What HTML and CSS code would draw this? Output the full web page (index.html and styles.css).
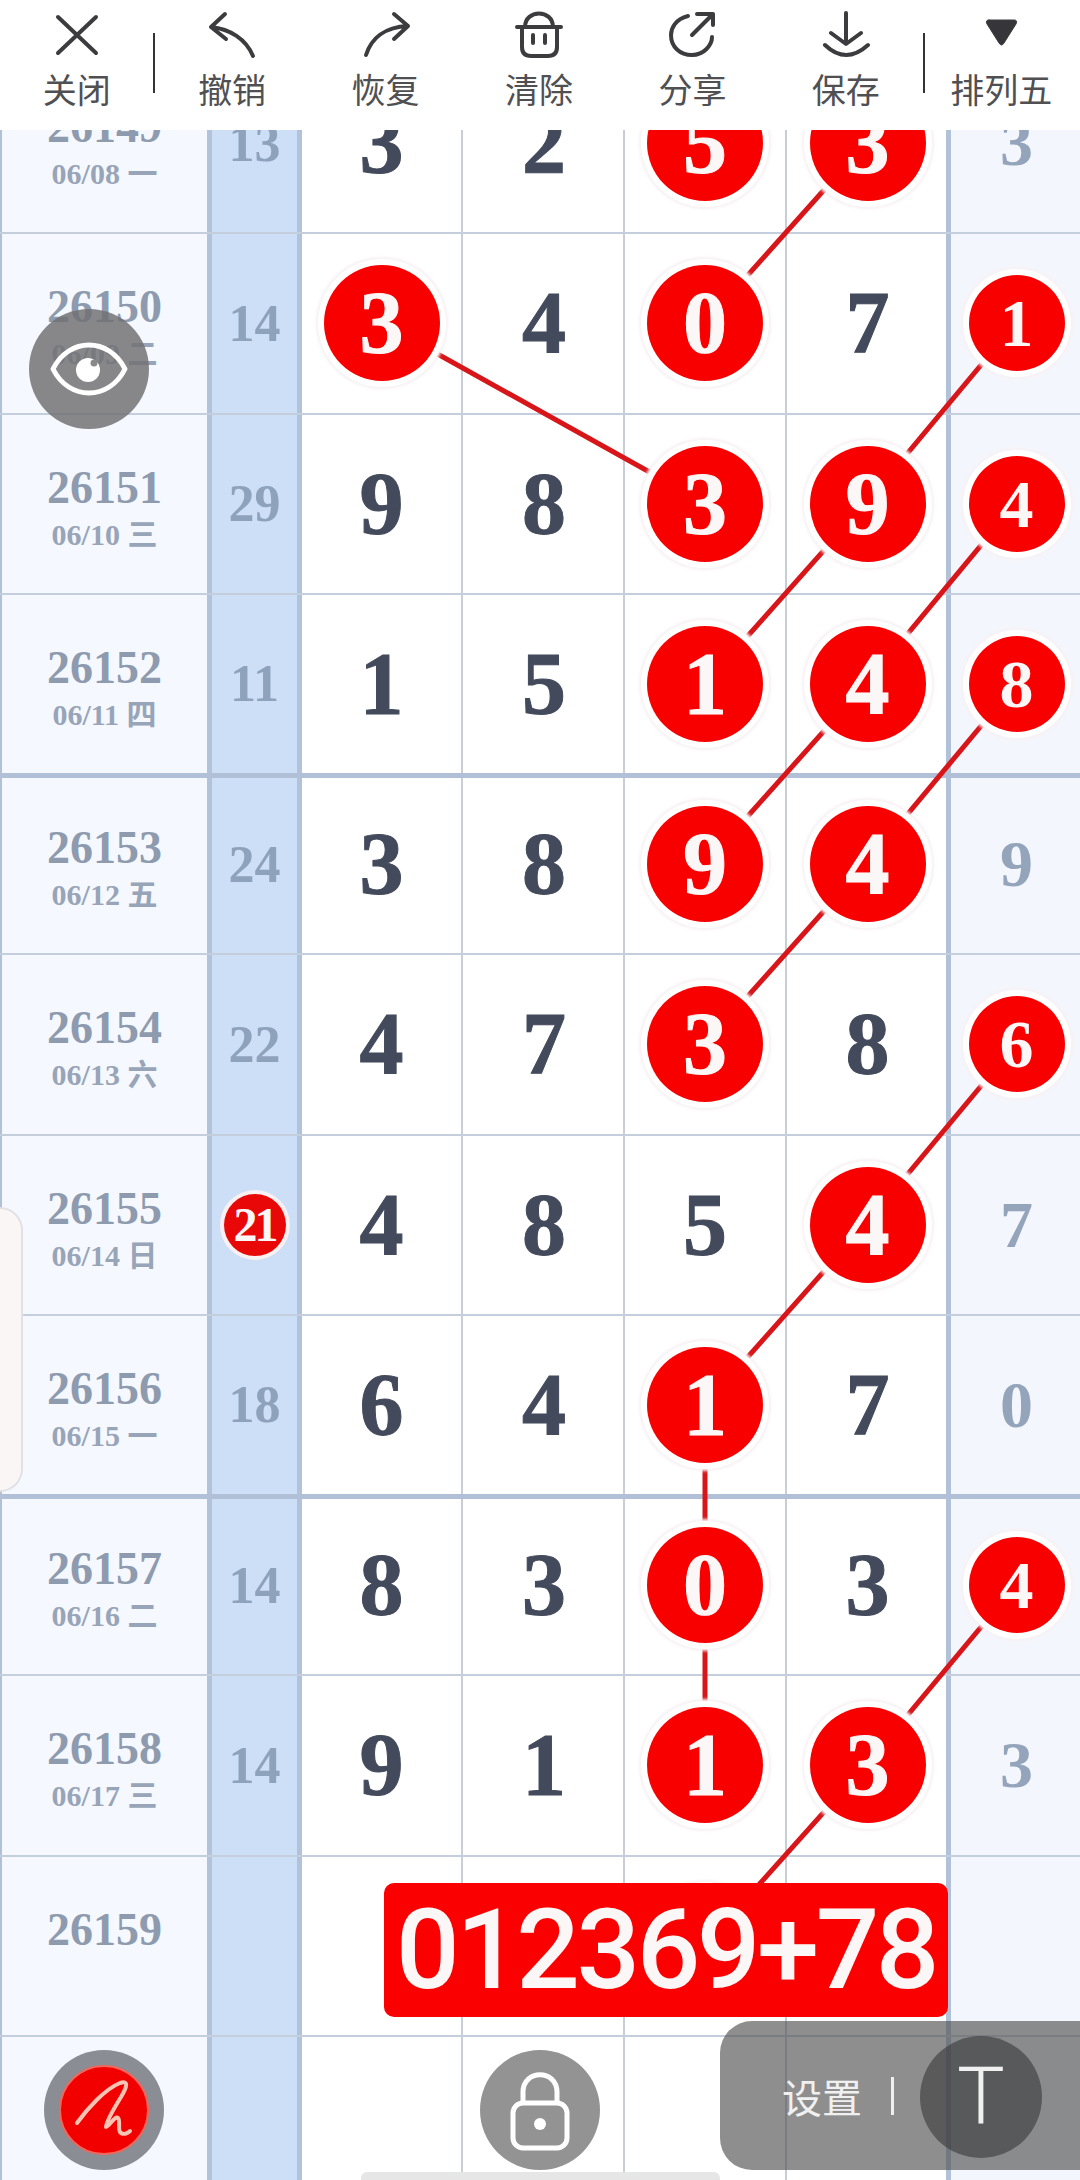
FILE: index.html
```html
<!DOCTYPE html>
<html lang="zh">
<head>
<meta charset="utf-8">
<title>排列五</title>
<link rel="stylesheet" href="styles.css">
</head>
<body>
<div class="viewport">
  <header class="toolbar">
    <div class="tool"><svg class="tool-icon" viewBox="0 0 56 48"><path d="M9 6 L47 42 M47 6 L9 42"/></svg><span>关闭</span></div>
    <i class="tool-sep"></i>
    <div class="tool"><svg class="tool-icon" viewBox="0 0 56 48"><path d="M21 3 L7 16 L22 28 M7 16 C26 18 42 28 49 45"/></svg><span>撤销</span></div>
    <div class="tool"><svg class="tool-icon" viewBox="0 0 56 48"><path d="M36 3 L50 15 L36 28 M8 44 C13 28 26 16 50 15"/></svg><span>恢复</span></div>
    <div class="tool"><svg class="tool-icon" viewBox="0 0 56 48"><path d="M6 16 H50 M11 16 V36 Q11 45 20 45 H37 Q46 45 46 36 V16 M14 16 C14 -2 42 -2 42 16 M22 24 V32 M34 24 V32"/></svg><span>清除</span></div>
    <div class="tool"><svg class="tool-icon" viewBox="0 0 56 48"><path d="M24 5 C11 8 7 18 7 24 C7 36 16 44 28 44 C40 44 48 34 48 26 M28 24 L49 3 M33 3 H49 V14"/></svg><span>分享</span></div>
    <div class="tool"><svg class="tool-icon" viewBox="0 0 56 48"><path d="M28 2 V32 M13 22 L28 33 L43 22 M7 34 Q28 54 50 34"/></svg><span>保存</span></div>
    <i class="tool-sep"></i>
    <div class="tool"><svg class="tool-icon tool-icon--solid" viewBox="0 0 56 48"><path d="M16 9 H41 Q45 9 43 13 L31 32 Q28.5 36 26 32 L14 13 Q12 9 16 9 Z"/></svg><span>排列五</span></div>
  </header>

  <svg class="trend" viewBox="0 0 1080 2180">
    <path d="M866 143 L705 323 M382 323 L705 503 M1016 323 L866 503 L705 684 M1016 503 L866 684 L705 864 M1016 684 L866 864 L705 1044 M1016 1044 L866 1224 L705 1405 L705 1765 M1016 1585 L866 1765 L705 1945"/>
  </svg>

  <main class="board">
    <div class="row">
      <div class="period"><b>26149</b><small>06/08 一</small></div><div class="sum">13</div>
      <div class="cell">3</div><div class="cell cell--mid">2</div><div class="cell"><span class="ball">5</span></div><div class="cell cell--end"><span class="ball">3</span></div><div class="extra">3</div>
    </div>
    <div class="row">
      <div class="period"><b>26150</b><small>06/09 二</small></div><div class="sum">14</div>
      <div class="cell"><span class="ball">3</span></div><div class="cell cell--mid">4</div><div class="cell"><span class="ball">0</span></div><div class="cell cell--end">7</div><div class="extra"><span class="ball ball--small">1</span></div>
    </div>
    <div class="row">
      <div class="period"><b>26151</b><small>06/10 三</small></div><div class="sum">29</div>
      <div class="cell">9</div><div class="cell cell--mid">8</div><div class="cell"><span class="ball">3</span></div><div class="cell cell--end"><span class="ball">9</span></div><div class="extra"><span class="ball ball--small">4</span></div>
    </div>
    <div class="row row--group">
      <div class="period"><b>26152</b><small>06/11 四</small></div><div class="sum">11</div>
      <div class="cell">1</div><div class="cell cell--mid">5</div><div class="cell"><span class="ball">1</span></div><div class="cell cell--end"><span class="ball">4</span></div><div class="extra"><span class="ball ball--small">8</span></div>
    </div>
    <div class="row">
      <div class="period"><b>26153</b><small>06/12 五</small></div><div class="sum">24</div>
      <div class="cell">3</div><div class="cell cell--mid">8</div><div class="cell"><span class="ball">9</span></div><div class="cell cell--end"><span class="ball">4</span></div><div class="extra">9</div>
    </div>
    <div class="row">
      <div class="period"><b>26154</b><small>06/13 六</small></div><div class="sum">22</div>
      <div class="cell">4</div><div class="cell cell--mid">7</div><div class="cell"><span class="ball">3</span></div><div class="cell cell--end">8</div><div class="extra"><span class="ball ball--small">6</span></div>
    </div>
    <div class="row">
      <div class="period"><b>26155</b><small>06/14 日</small></div><div class="sum"><span class="ball ball--tiny">21</span></div>
      <div class="cell">4</div><div class="cell cell--mid">8</div><div class="cell">5</div><div class="cell cell--end"><span class="ball">4</span></div><div class="extra">7</div>
    </div>
    <div class="row row--group">
      <div class="period"><b>26156</b><small>06/15 一</small></div><div class="sum">18</div>
      <div class="cell">6</div><div class="cell cell--mid">4</div><div class="cell"><span class="ball">1</span></div><div class="cell cell--end">7</div><div class="extra">0</div>
    </div>
    <div class="row">
      <div class="period"><b>26157</b><small>06/16 二</small></div><div class="sum">14</div>
      <div class="cell">8</div><div class="cell cell--mid">3</div><div class="cell"><span class="ball">0</span></div><div class="cell cell--end">3</div><div class="extra"><span class="ball ball--small">4</span></div>
    </div>
    <div class="row">
      <div class="period"><b>26158</b><small>06/17 三</small></div><div class="sum">14</div>
      <div class="cell">9</div><div class="cell cell--mid">1</div><div class="cell"><span class="ball">1</span></div><div class="cell cell--end"><span class="ball">3</span></div><div class="extra">3</div>
    </div>
    <div class="row">
      <div class="period"><b>26159</b><small></small></div><div class="sum"></div>
      <div class="cell"></div><div class="cell cell--mid"></div><div class="cell"><span class="ball"></span></div><div class="cell cell--end"></div><div class="extra"></div>
    </div>
    <div class="row">
      <div class="period"></div><div class="sum"></div>
      <div class="cell"></div><div class="cell cell--mid"></div><div class="cell"></div><div class="cell cell--end"></div><div class="extra"></div>
    </div>
  </main>

  <div class="side-handle"></div>

  <button class="fab fab--eye">
    <svg viewBox="0 0 120 120"><path class="line-white" d="M24 60 C40 28 80 28 96 60 C80 92 40 92 24 60 Z"/><circle class="fill-white" cx="59" cy="61" r="12"/><circle class="fill-eye" cx="65" cy="54" r="3.5"/></svg>
  </button>

  <div class="prediction">012369+78</div>

  <button class="fab fab--pen">
    <span class="pen-face"><svg viewBox="0 0 86 86"><path class="line-pen" d="M16 56 C26 42 44 22 59 16 C68 13 66 20 60 30 C54 40 46 52 45 60 C48 60 54 48 57 51 C60 54 56 64 60 66 C63 68 67 66 69 64"/></svg></span>
  </button>

  <button class="fab fab--lock">
    <svg viewBox="0 0 120 120"><rect class="line-white" x="33" y="53" width="54" height="45" rx="10"/><path class="line-white" d="M43 53 V42 C43 19 77 19 77 42 V53"/><circle class="fill-white" cx="60" cy="74" r="6"/></svg>
  </button>

  <div class="settings">
    <span class="settings-label">设置</span>
    <i class="settings-sep"></i>
    <span class="settings-t">T</span>
  </div>

  <div class="home-bar"></div>
</div>
</body>
</html>
```
FILE: styles.css
```css
* { box-sizing: border-box; }
html, body { margin: 0; padding: 0; background: #fff; }

.viewport {
  position: relative;
  width: 1080px;
  height: 2180px;
  overflow: hidden;
  font-family: "Liberation Serif", "Noto Sans CJK SC", serif;
}

/* Toolbar */
.toolbar {
  position: relative;
  z-index: 6;
  display: flex;
  height: 130px;
  padding-right: 2px;
  background: #fff;
  font-family: "Noto Sans CJK SC", "Noto Sans", sans-serif;
  color: #505052;
}
.tool {
  flex: 1 1 0;
  display: flex;
  flex-direction: column;
  align-items: center;
  padding-top: 11px;
}
.tool span { font-size: 34px; line-height: 38px; margin-top: 11px; white-space: nowrap; }
.tool-icon { width: 56px; height: 48px; fill: none; stroke: #3c3c3e; stroke-width: 4; stroke-linecap: round; stroke-linejoin: round; }
.tool-icon--solid { fill: #36363a; stroke-width: 1; }
.tool-sep { flex: none; width: 2px; height: 60px; margin-top: 33px; background: #333; }

/* Board */
.board { margin-top: -76px; }
.row {
  position: relative;
  display: grid;
  grid-template-columns: 207px 95px 161px 162px 162px 164px 129px;
  height: 180.25px;
  border-bottom: 2px solid #c5cedc;
}
.row--group::after {
  content: "";
  position: absolute;
  left: 0;
  right: 0;
  bottom: -5px;
  z-index: 1;
  height: 5px;
  background: #b1c0d6;
}
.period {
  display: flex;
  flex-direction: column;
  align-items: center;
  justify-content: center;
  padding-top: 8px;
  background: #f5f8ff;
  border-left: 2px solid #b1c1d8;
  color: #8e9bae;
}
.period b { font-size: 46px; line-height: 48px; }
.period small { min-height: 34px; margin-top: 6px; font-size: 30px; line-height: 34px; font-weight: 700; color: #98a4b7; white-space: nowrap; }
.sum {
  display: flex;
  align-items: center;
  justify-content: center;
  background: #cddff7;
  border-left: 5px solid #b1c2da;
  border-right: 5px solid #b1c2da;
  font-size: 52px;
  font-weight: 700;
  color: #8fa2bb;
}
.cell {
  display: flex;
  align-items: center;
  justify-content: center;
  background: #fff;
  border-right: 2px solid #c9cdd5;
  font-size: 88px;
  font-weight: 700;
  line-height: 1;
  color: #434a5c;
  -webkit-text-stroke: 1px currentColor;
}
.cell--mid { padding-left: 2px; }
.cell--end { padding-left: 2px; border-right: 5px solid #b1c1d8; }
.extra {
  display: flex;
  align-items: center;
  justify-content: center;
  padding-left: 2px;
  background: #f4f6fd;
  font-size: 66px;
  font-weight: 700;
  line-height: 1;
  color: #94a5bb;
}

/* Balls */
.ball {
  position: relative;
  z-index: 3;
  display: flex;
  flex: none;
  align-items: center;
  justify-content: center;
  width: 116px;
  height: 116px;
  border-radius: 50%;
  background: #f90000;
  color: #fbf7f7;
  box-shadow: 0 0 0 6px #fff, 0 0 3px 8px #f7f1f4;
}
.ball--small { width: 96px; height: 96px; font-size: 68px; }
.ball--tiny {
  width: 62px;
  height: 62px;
  font-size: 48px;
  letter-spacing: -3px;
  background: #e80808;
  box-shadow: 0 0 0 4px #f9f1f1;
}

.trend {
  position: absolute;
  left: 0;
  top: 0;
  z-index: 2;
  width: 1080px;
  height: 2180px;
  fill: none;
  stroke: #d8161a;
  stroke-width: 5;
}

/* Floating parts */
.side-handle {
  position: absolute;
  left: 0;
  top: 1207px;
  z-index: 4;
  width: 23px;
  height: 285px;
  background: #fbf6f6;
  border: 2px solid #e2e1e4;
  border-left: 0;
  border-radius: 0 26px 26px 0;
}
.fab {
  position: absolute;
  z-index: 4;
  width: 120px;
  height: 120px;
  padding: 0;
  border: 0;
  border-radius: 50%;
}
.fab svg { display: block; }
.fab--eye { left: 29px; top: 309px; background: rgba(112, 112, 114, .83); }
.fab--pen { left: 44px; top: 2050px; display: flex; align-items: center; justify-content: center; background: #8a8d94; }
.fab--lock { left: 480px; top: 2050px; background: #939393; }
.line-white { fill: none; stroke: #fff; stroke-width: 5; stroke-linejoin: round; }
.fill-white { fill: #fff; }
.fill-eye { fill: #8a8a8c; }
.pen-face { display: block; width: 90px; height: 90px; border: 2px solid #f0675c; border-radius: 50%; background: #f20000; overflow: hidden; }
.pen-face svg { width: 86px; height: 86px; }
.line-pen { fill: none; stroke: #f7c4b4; stroke-width: 4; stroke-linecap: round; stroke-linejoin: round; }

.prediction {
  position: absolute;
  left: 384px;
  top: 1883px;
  z-index: 4;
  width: 564px;
  height: 134px;
  border-radius: 10px;
  background: #fb0000;
  color: #fbf7f7;
  font-family: Roboto, "Liberation Sans", sans-serif;
  font-size: 112px;
  font-weight: 500;
  line-height: 134px;
  letter-spacing: -3.5px;
  text-align: center;
  white-space: nowrap;
}

.settings {
  position: absolute;
  left: 720px;
  top: 2021px;
  z-index: 5;
  display: flex;
  align-items: center;
  width: 360px;
  height: 149px;
  padding-left: 62px;
  border-radius: 32px 0 0 32px;
  background: rgba(78, 78, 78, .64);
  color: #f0f0f0;
  font-family: "Noto Sans CJK SC", "Noto Sans", sans-serif;
}
.settings-label { font-size: 40px; line-height: 48px; }
.settings-sep { width: 3px; height: 38px; margin: 0 26px 0 29px; background: #efefef; }
.settings-t {
  display: flex;
  align-items: center;
  justify-content: center;
  width: 122px;
  height: 122px;
  margin-top: 3px;
  border-radius: 50%;
  background: rgba(58, 58, 60, .62);
  font-family: Roboto, sans-serif;
  font-size: 80px;
  font-weight: 300;
  line-height: 1;
}
.home-bar {
  position: absolute;
  left: 361px;
  top: 2172px;
  z-index: 4;
  width: 359px;
  height: 8px;
  border-radius: 6px 6px 0 0;
  background: #e6e6e6;
}
```
